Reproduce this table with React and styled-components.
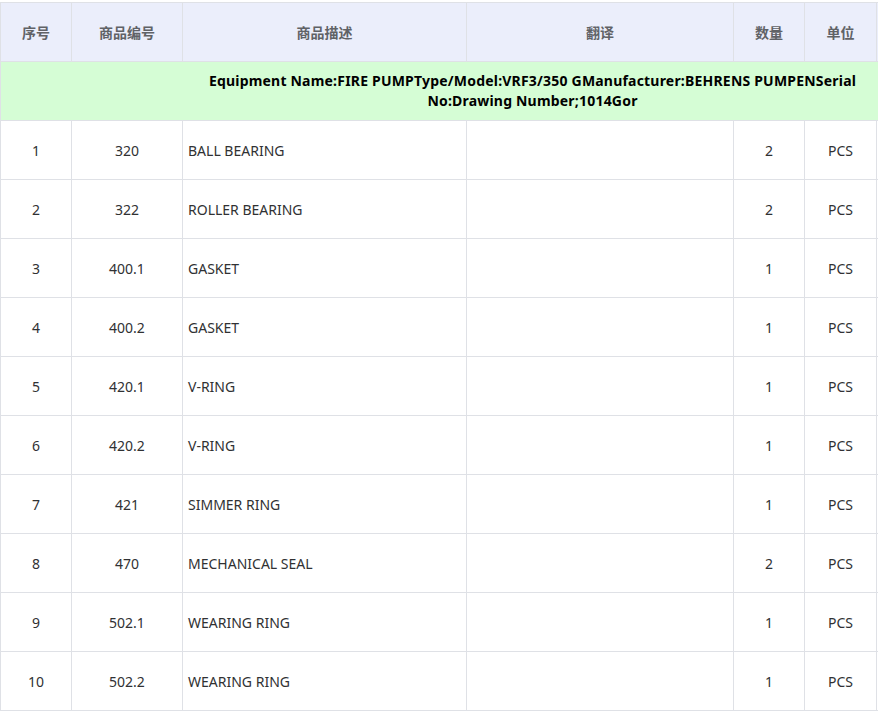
import React from "react";
import styled, { createGlobalStyle } from "styled-components";

const GlobalStyle = createGlobalStyle`
  body {
    margin: 0;
    background: #ffffff;
    font-family: "Noto Sans", "Noto Sans CJK SC", sans-serif;
  }
`;

const Wrapper = styled.div`
  width: 878px;
  height: 714px;
  padding-top: 2px;
  box-sizing: border-box;
  overflow: hidden;
`;

const Table = styled.table`
  width: 892px;
  table-layout: fixed;
  border-collapse: collapse;
  font-size: 14px;
`;

const HeadCell = styled.th`
  height: 58px;
  padding: 0;
  background-color: #ebeefb;
  border: 1px solid #dfe1e6;
  color: #606266;
  font-weight: 700;
  text-align: center;
  vertical-align: middle;
`;

const Cell = styled.td`
  height: 58px;
  padding: ${(p) => (p.$left ? "0 5px" : "0")};
  border: 1px solid #dfe1e6;
  color: #303133;
  text-align: ${(p) => (p.$left ? "left" : "center")};
  vertical-align: middle;
  white-space: nowrap;
`;

const GroupCell = styled.td`
  height: 58px;
  padding: 0 12px 0 184px;
  background-color: #d5fdd5;
  border: 1px solid #dfe1e6;
  color: #000000;
  font-weight: 700;
  line-height: 20px;
  letter-spacing: 0.2px;
  text-align: center;
  vertical-align: middle;
`;

const columns = [71, 111, 284, 267, 71, 72, 16];
const headers = ["序号", "商品编号", "商品描述", "翻译", "数量", "单位", ""];

const rows = [
  ["1", "320", "BALL BEARING", "2"],
  ["2", "322", "ROLLER BEARING", "2"],
  ["3", "400.1", "GASKET", "1"],
  ["4", "400.2", "GASKET", "1"],
  ["5", "420.1", "V-RING", "1"],
  ["6", "420.2", "V-RING", "1"],
  ["7", "421", "SIMMER RING", "1"],
  ["8", "470", "MECHANICAL SEAL", "2"],
  ["9", "502.1", "WEARING RING", "1"],
  ["10", "502.2", "WEARING RING", "1"],
];

export default function App() {
  return (
    <Wrapper>
      <GlobalStyle />
      <Table>
        <colgroup>
          {columns.map((w, i) => (
            <col key={i} style={{ width: w }} />
          ))}
        </colgroup>
        <thead>
          <tr>
            {headers.map((h, i) => (
              <HeadCell key={i}>{h}</HeadCell>
            ))}
          </tr>
        </thead>
        <tbody>
          <tr>
            <GroupCell colSpan={7}>
              Equipment Name:FIRE PUMPType/Model:VRF3/350 GManufacturer:BEHRENS
              PUMPENSerial No:Drawing Number;1014Gor
            </GroupCell>
          </tr>
          {rows.map(([no, code, desc, qty]) => (
            <tr key={no}>
              <Cell>{no}</Cell>
              <Cell>{code}</Cell>
              <Cell $left>{desc}</Cell>
              <Cell></Cell>
              <Cell>{qty}</Cell>
              <Cell>PCS</Cell>
              <Cell></Cell>
            </tr>
          ))}
        </tbody>
      </Table>
    </Wrapper>
  );
}
